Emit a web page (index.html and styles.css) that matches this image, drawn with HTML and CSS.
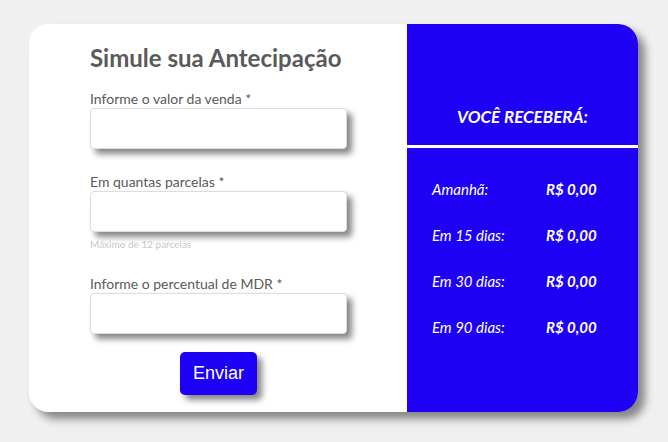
FILE: index.html
```html
<!DOCTYPE html>
<html lang="pt-BR">
<head>
<meta charset="utf-8">
<title>Simule sua Antecipação</title>
<link rel="stylesheet" href="styles.css">
</head>
<body>
<main class="card">
  <section class="form-panel">
    <h1 class="title">Simule sua Antecipação</h1>
    <form class="form">
      <div class="field">
        <label class="label" for="valor">Informe o valor da venda *</label>
        <input class="input" id="valor" type="text">
      </div>
      <div class="field">
        <label class="label" for="parcelas">Em quantas parcelas *</label>
        <input class="input" id="parcelas" type="text">
        <small class="hint">Máximo de 12 parcelas</small>
      </div>
      <div class="field field-mdr">
        <label class="label" for="mdr">Informe o percentual de MDR *</label>
        <input class="input" id="mdr" type="text">
      </div>
      <div class="actions">
        <button class="button" type="button">Enviar</button>
      </div>
    </form>
  </section>
  <section class="result-panel">
    <header class="result-head">
      <h2 class="result-title">VOCÊ RECEBERÁ:</h2>
    </header>
    <ul class="result-list">
      <li class="row"><span class="row-label">Amanhã:</span><span class="row-value">R$ 0,00</span></li>
      <li class="row"><span class="row-label">Em 15 dias:</span><span class="row-value">R$ 0,00</span></li>
      <li class="row"><span class="row-label">Em 30 dias:</span><span class="row-value">R$ 0,00</span></li>
      <li class="row"><span class="row-label">Em 90 dias:</span><span class="row-value">R$ 0,00</span></li>
    </ul>
  </section>
</main>
</body>
</html>
```

FILE: styles.css
```css
* { box-sizing: border-box; }
html, body { margin: 0; padding: 0; }
body {
  background: #f0f0f0;
  font-family: "Lato", "Noto Sans", sans-serif;
  padding: 24px 0 0 29px;
  height: 442px;
  overflow: hidden;
}
.card {
  width: 609px;
  height: 388px;
  display: flex;
  border-radius: 20px;
  overflow: hidden;
  background: #fff;
  box-shadow: 7px 7px 8px #868686;
}
.form-panel {
  width: 378px;
  padding: 19px 0 0 61px;
  background: #fff;
}
.title {
  margin: 0;
  font-size: 24px;
  line-height: 30px;
  font-weight: 700;
  color: #5a5a5a;
}
.form { margin-top: 18px; }
.field { display: flex; flex-direction: column; width: 257px; }
.label {
  font-size: 14px;
  line-height: 16px;
  color: #5a5a5a;
  margin-bottom: 1px;
}
.input {
  height: 41px;
  width: 257px;
  border: 1px solid #d8dee2;
  border-radius: 4px;
  background: #fff;
  box-shadow: 5px 5px 6px #868686;
  margin: 0;
}
.field + .field { margin-top: 25px; }
.hint {
  font-size: 10px;
  line-height: 12px;
  color: #c8c8c8;
  margin-top: 6px;
}
.field-mdr { margin-top: 26px !important; }
.actions {
  width: 257px;
  display: flex;
  justify-content: center;
  margin-top: 18px;
}
.button {
  width: 77px;
  height: 43px;
  background: #1e00f5;
  color: #fff;
  border: 0;
  border-radius: 5px;
  font-family: "Liberation Sans", Arial, sans-serif;
  font-size: 18px;
  box-shadow: 5px 5px 6px #868686;
}
.result-panel {
  width: 231px;
  background: #1e00f5;
  color: #fff;
}
.result-head {
  height: 124px;
  border-bottom: 3px solid #fff;
  display: flex;
  align-items: flex-end;
  justify-content: center;
  padding-bottom: 18px;
}
.result-title {
  margin: 0;
  font-size: 17px;
  font-style: italic;
  font-weight: 700;
  line-height: 20px;
}
.result-list {
  list-style: none;
  margin: 0;
  padding: 31px 0 0 25px;
  display: flex;
  flex-direction: column;
  gap: 26px;
}
.row { display: flex; font-size: 15px; line-height: 20px; font-style: italic; }
.row-label { width: 114px; }
.row-value { font-weight: 700; }
```
